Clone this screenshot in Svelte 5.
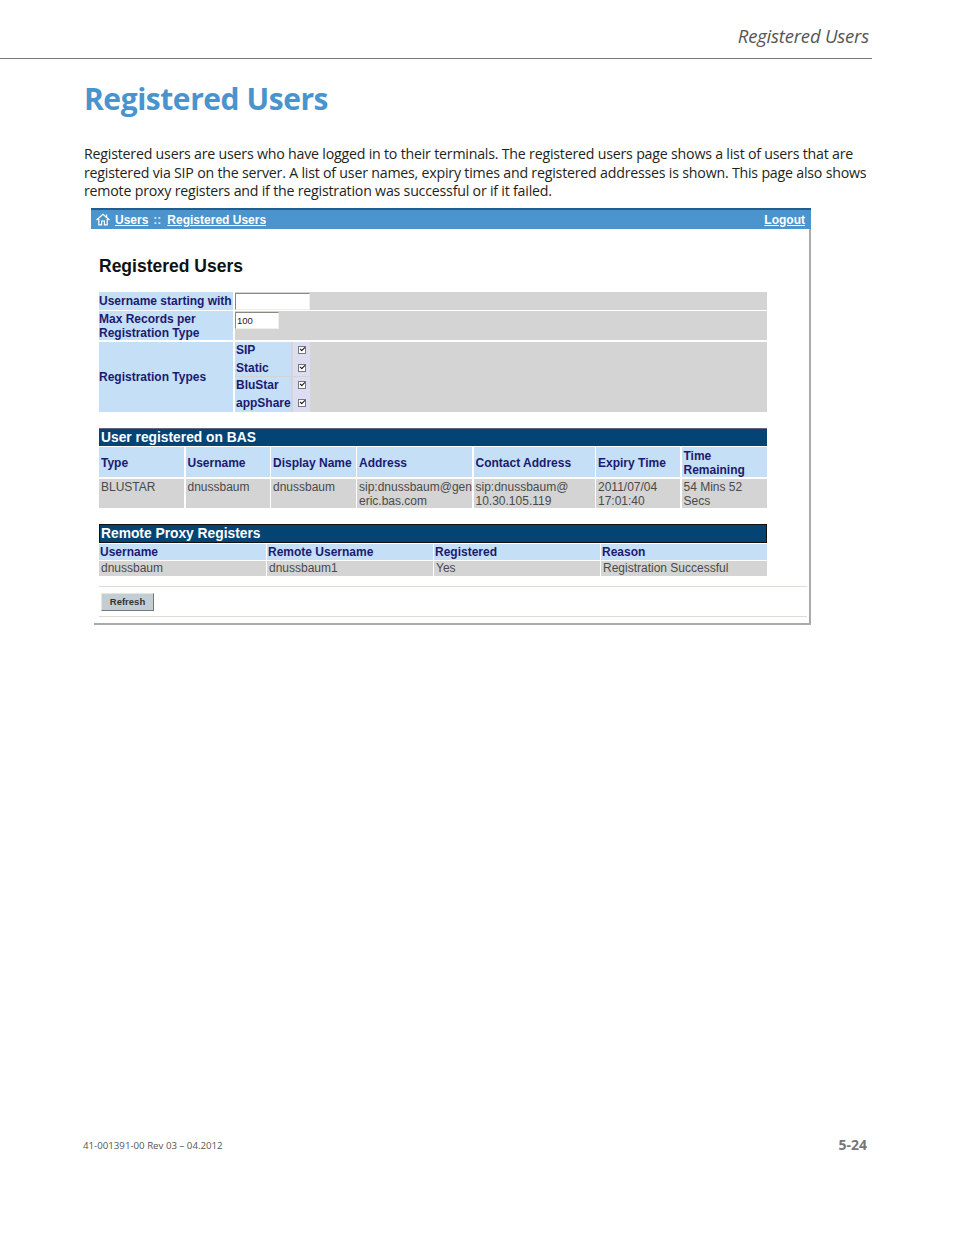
<script>
  const regTypes = ["SIP", "Static", "BluStar", "appShare"];

  const basCols = ["Type", "Username", "Display Name", "Address", "Contact Address", "Expiry Time", "Time Remaining"];
  const basRow = ["BLUSTAR", "dnussbaum", "dnussbaum", "sip:dnussbaum@gen eric.bas.com", "sip:dnussbaum@ 10.30.105.119", "2011/07/04 17:01:40", "54 Mins 52 Secs"];

  const proxyCols = ["Username", "Remote Username", "Registered", "Reason"];
  const proxyRow = ["dnussbaum", "dnussbaum1", "Yes", "Registration Successful"];
</script>

<div class="page">
  <header class="top">
    <span>Registered Users</span>
  </header>

  <h1>Registered Users</h1>

  <p class="intro">
    Registered users are users who have logged in to their terminals. The registered users page shows a list of users that are<br />
    registered via SIP on the server. A list of user names, expiry times and registered addresses is shown. This page also shows<br />
    remote proxy registers and if the registration was successful or if it failed.
  </p>

  <div class="shot">
    <div class="bar">
      <svg width="14" height="13" viewBox="0 0 14 13" fill="none" stroke="#fff" stroke-width="1.2">
        <path d="M0.5 7 L7 1.2 L13.5 7" />
        <path d="M2.8 6 V11.8 H5.6 V8 H8.4 V11.8 H11.2 V6" />
        <path d="M10.6 1.6 V4" />
      </svg>
      <a href="#users">Users</a>
      <span class="sep">::</span>
      <a href="#registered">Registered Users</a>
      <a class="logout" href="#logout">Logout</a>
    </div>

    <div class="panel">
      <h2>Registered Users</h2>

      <div class="filters">
        <div class="lbl">Username starting with</div>
        <div class="val"><input class="in-a" type="text" /></div>
        <div class="lbl two">Max Records per<br />Registration Type</div>
        <div class="val"><input class="in-b" type="text" value="100" /></div>
        <div class="lbl">Registration Types</div>
        <div class="val types">
          {#each regTypes as t}
            <div class="type-name">{t}</div>
            <div class="type-check"><span class="check"></span></div>
          {/each}
        </div>
      </div>

      <div class="title t-bas">User registered on BAS</div>
      <div class="bas">
        {#each basCols as c}
          <div class="th">{c}</div>
        {/each}
        {#each basRow as c}
          <div class="td">{c}</div>
        {/each}
      </div>

      <div class="title t-proxy">Remote Proxy Registers</div>
      <div class="proxy">
        {#each proxyCols as c}
          <div class="th">{c}</div>
        {/each}
        {#each proxyRow as c}
          <div class="td">{c}</div>
        {/each}
      </div>

      <div class="actions">
        <button>Refresh</button>
      </div>
    </div>
  </div>

  <footer>
    <span class="doc">41-001391-00 Rev 03 – 04.2012</span>
    <span class="num">5-24</span>
  </footer>
</div>

<style>
  :global(body) {
    background: #fff;
  }

  .page {
    height: 1235px;
    display: flex;
    flex-direction: column;
    font-family: "Open Sans", sans-serif;
    color: #231f20;
    overflow: hidden;
  }

  .top {
    width: 872px;
    height: 59px;
    box-sizing: border-box;
    border-bottom: 1px solid #777;
    padding: 23px 3px 0 0;
    text-align: right;
    font-style: italic;
    font-size: 18.5px;
    line-height: 25px;
    letter-spacing: -0.2px;
    color: #555;
  }

  h1 {
    margin: 18px 0 0 84px;
    font-size: 30px;
    line-height: 44px;
    font-weight: 700;
    letter-spacing: -0.45px;
    color: #4a94cd;
  }

  .intro {
    margin: 24px 0 0 84px;
    font-size: 14.2px;
    line-height: 18.5px;
    letter-spacing: -0.21px;
    white-space: nowrap;
  }

  .shot {
    margin: 7px 0 0 91px;
    width: 720px;
    font-family: "Liberation Sans", Arial, sans-serif;
  }

  .bar {
    height: 18px;
    border-top: 2px solid #1f5f8f;
    background: #4b94cd;
    display: flex;
    align-items: center;
    gap: 5px;
    padding: 1px 6px 0 5px;
    font-size: 12px;
    font-weight: 700;
    box-sizing: content-box;
  }

  .bar svg {
    flex: none;
  }

  .bar a {
    color: #fff;
    text-decoration: underline;
  }

  .sep {
    color: #dce9f5;
    margin-right: 1px;
  }

  .logout {
    margin-left: auto;
  }

  .panel {
    margin-left: 3px;
    height: 396px;
    box-sizing: border-box;
    background: #fff;
    border-right: 2px solid #aaa;
    border-bottom: 2px solid #aaa;
    padding-left: 5px;
  }

  h2 {
    margin: 0;
    padding: 27px 0 0 0;
    height: 63px;
    box-sizing: border-box;
    font-size: 17.5px;
    line-height: 20px;
    font-weight: 700;
    color: #111;
  }

  .filters {
    width: 668px;
    display: grid;
    grid-template-columns: 134px 1fr;
    grid-template-rows: 18px 29px 70px;
    gap: 1.5px 2px;
    font-size: 12px;
  }

  .lbl {
    background: #c4dff6;
    color: #1c1a70;
    font-weight: 700;
    display: flex;
    align-items: center;
    line-height: 14px;
    white-space: nowrap;
  }

  .val {
    background: #d4d4d4;
  }

  input {
    display: block;
    box-sizing: border-box;
    background: #fff;
    border: 1px solid;
    border-color: #8a8880 #efefe8 #efefe8 #8a8880;
    padding: 0 1px;
    font-family: "Liberation Sans", Arial, sans-serif;
    font-size: 9.5px;
    color: #222;
    outline: none;
  }

  .in-a {
    width: 75px;
    height: 17px;
    margin-top: 1px;
  }

  .in-b {
    width: 44px;
    height: 17px;
    margin-top: 1px;
  }

  .types {
    display: grid;
    grid-template-columns: 56px 17px;
    grid-auto-rows: 1fr;
    row-gap: 0.5px;
    column-gap: 2px;
  }

  .type-name {
    background: #c4dff6;
    color: #1c1a70;
    font-weight: 700;
    display: flex;
    align-items: center;
    padding-left: 1px;
    white-space: nowrap;
  }

  .type-check {
    background: #dcdcf2;
    display: flex;
    align-items: center;
    justify-content: center;
  }

  .check {
    width: 8px;
    height: 8px;
    box-sizing: border-box;
    border: 1px solid #777;
    background: #fff;
    position: relative;
  }

  .check::after {
    content: "";
    position: absolute;
    left: 1px;
    top: 0;
    width: 4px;
    height: 2px;
    border-left: 1.3px solid #111;
    border-bottom: 1.3px solid #111;
    transform: rotate(-45deg);
  }

  .title {
    width: 668px;
    box-sizing: border-box;
    background: #044474;
    color: #fff;
    font-size: 13.8px;
    font-weight: 700;
    padding-left: 2px;
    display: flex;
    align-items: center;
  }

  .t-bas {
    margin-top: 16px;
    height: 18px;
    border-top: 1px solid #667;
  }

  .t-proxy {
    margin-top: 16px;
    height: 19px;
    border: 1px solid #111;
    padding: 1px 0 0 1px;
  }

  .bas,
  .proxy {
    width: 668px;
    display: grid;
    gap: 1.5px;
    font-size: 12px;
  }

  .bas {
    margin-top: 1.5px;
    grid-template-columns: 85px 84px 84.5px 115px 121px 84px 85px;
    grid-template-rows: 30px 29px;
  }

  .proxy {
    margin-top: 1.5px;
    grid-template-columns: 166.5px 165.5px 165.5px 1fr;
    grid-template-rows: 15.5px 14.5px;
  }

  .th {
    background: #c4dff6;
    color: #1c1a70;
    font-weight: 700;
    display: flex;
    align-items: center;
    line-height: 14px;
    padding: 1px 0 0 2px;
  }

  .proxy .th {
    padding-left: 1px;
  }

  .td {
    background: #d4d4d4;
    color: #4a4a4a;
    line-height: 14px;
    padding: 1px 0 0 2px;
    overflow-wrap: anywhere;
  }

  .proxy .td {
    padding: 0 0 0 2px;
    white-space: nowrap;
  }

  .actions {
    margin-top: 10px;
    width: 708px;
    height: 31px;
    box-sizing: border-box;
    border-top: 1px solid #dedcd2;
    border-bottom: 1px solid #dedcd2;
    padding: 6px 0 0 2px;
  }

  button {
    display: block;
    width: 53px;
    height: 18px;
    padding: 0;
    box-sizing: border-box;
    background: #c3ced4;
    border: 1px solid;
    border-color: #e6e6e0 #777 #777 #e6e6e0;
    font-family: "Liberation Sans", Arial, sans-serif;
    font-size: 9.5px;
    font-weight: 700;
    color: #333;
  }

  footer {
    margin-top: auto;
    height: 97px;
    padding: 0 87px 0 83px;
    display: flex;
    justify-content: space-between;
    align-items: flex-start;
    box-sizing: border-box;
  }

  .doc {
    font-size: 9.7px;
    line-height: 13px;
    margin-top: 1px;
    color: #555;
  }

  .num {
    font-size: 14px;
    line-height: 14px;
    font-weight: 700;
    color: #777;
  }
</style>
